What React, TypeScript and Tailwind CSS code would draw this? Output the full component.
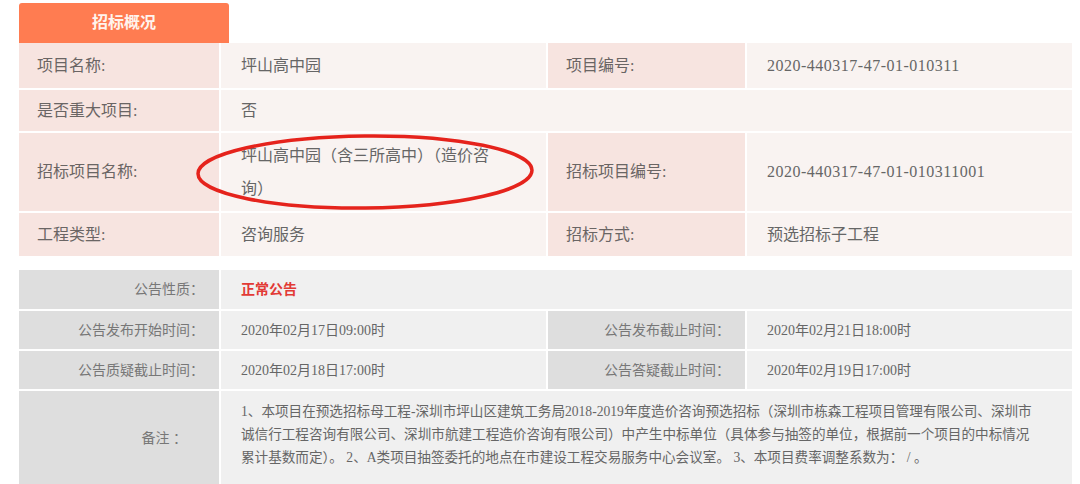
import React from "react";

const F = "font-['Liberation_Serif','Noto_Sans_CJK_SC',serif]";

function L1({ children }: { children: React.ReactNode }) {
  return (
    <div className="flex items-center bg-[#f7e4e0] pl-[18px] text-[16px] text-[#6a6564]">
      {children}
    </div>
  );
}
function V1({ children, span }: { children: React.ReactNode; span?: boolean }) {
  return (
    <div
      className={
        "flex items-center bg-[#f9f3f1] pl-[20px] text-[16px] text-[#666]" +
        (span ? " col-span-3" : "")
      }
    >
      {children}
    </div>
  );
}
function L2({ children }: { children: React.ReactNode }) {
  return (
    <div className="flex items-center justify-end bg-[#dedede] pr-[15px] text-[14px] text-[#777]">
      {children}
    </div>
  );
}
function V2({ children, span }: { children: React.ReactNode; span?: boolean }) {
  return (
    <div
      className={
        "flex items-center bg-[#f0f0f0] pl-[20px] text-[14px] text-[#666]" +
        (span ? " col-span-3" : "")
      }
    >
      {children}
    </div>
  );
}

export default function App() {
  return (
    <div className={`${F} relative h-[484px] w-[1080px] overflow-hidden bg-white`}>
      <div className="pl-[19px] pt-[3px]">
        <div className="flex h-[40px] w-[210px] items-center justify-center rounded-t-[3px] bg-[#ff7c51] text-[16px] font-bold text-[#fff4ee]">
          招标概况
        </div>
        <div className="grid w-[1053px] grid-cols-[200px_325px_197px_325px] grid-rows-[45px_41px_78px_43px] gap-[2px] bg-white">
          <L1>项目名称:</L1>
          <V1>坪山高中园</V1>
          <L1>项目编号:</L1>
          <V1>
            <span className="tracking-[0.5px]">2020-440317-47-01-010311</span>
          </V1>

          <L1>是否重大项目:</L1>
          <V1 span>否</V1>

          <L1>招标项目名称:</L1>
          <V1>
            <span className="w-[270px] leading-[33px]">坪山高中园（含三所高中）（造价咨询）</span>
          </V1>
          <L1>招标项目编号:</L1>
          <V1>
            <span className="tracking-[0.5px]">2020-440317-47-01-010311001</span>
          </V1>

          <L1>工程类型:</L1>
          <V1>咨询服务</V1>
          <L1>招标方式:</L1>
          <V1>预选招标子工程</V1>
        </div>

        <div className="mt-[14px] grid w-[1053px] grid-cols-[200px_325px_197px_325px] grid-rows-[39px_38px_38px_94px] gap-[2px] bg-white">
          <L2>公告性质：</L2>
          <V2 span>
            <span className="font-bold text-[#e23a35]">正常公告</span>
          </V2>

          <L2>公告发布开始时间：</L2>
          <V2>2020年02月17日09:00时</V2>
          <L2>公告发布截止时间：</L2>
          <V2>2020年02月21日18:00时</V2>

          <L2>公告质疑截止时间：</L2>
          <V2>2020年02月18日17:00时</V2>
          <L2>公告答疑截止时间：</L2>
          <V2>2020年02月19日17:00时</V2>

          <div className="flex items-center justify-end bg-[#dedede] pr-[32px] text-[14px] text-[#777]">
            备注 ：
          </div>
          <div className="col-span-3 bg-[#f0f0f0] pl-[20px] pt-[9px] text-[13.6px] leading-[23px] text-[#666]">
            1、本项目在预选招标母工程-深圳市坪山区建筑工务局2018-2019年度造价咨询预选招标（深圳市栋森工程项目管理有限公司、深圳市
            <br />
            诚信行工程咨询有限公司、深圳市航建工程造价咨询有限公司）中产生中标单位（具体参与抽签的单位，根据前一个项目的中标情况
            <br />
            累计基数而定）。 2、A类项目抽签委托的地点在市建设工程交易服务中心会议室。 3、本项目费率调整系数为： / 。
          </div>
        </div>
      </div>

      <svg
        className="pointer-events-none absolute left-[193px] top-[131px]"
        width="346"
        height="82"
        viewBox="0 0 346 82"
      >
        <ellipse
          cx="172"
          cy="41"
          rx="167"
          ry="36"
          fill="none"
          stroke="#e5231c"
          strokeWidth="3.5"
          transform="rotate(-0.6 172 41)"
        />
      </svg>
    </div>
  );
}
